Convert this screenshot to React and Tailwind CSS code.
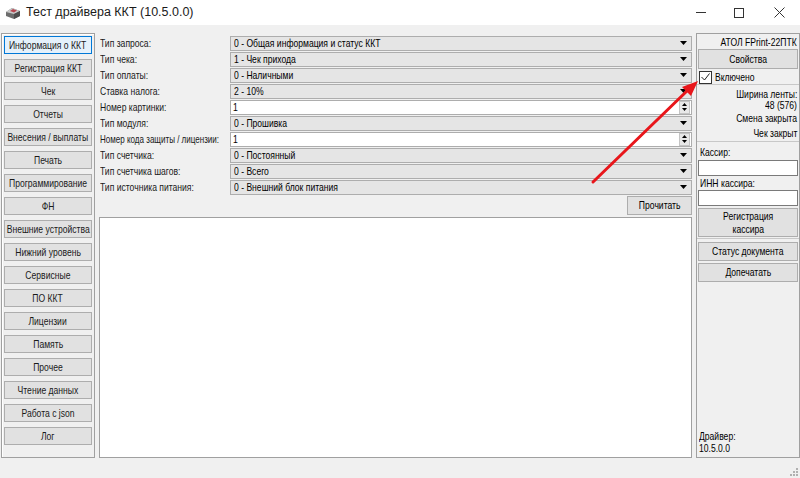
import React from 'react';

const navItems = [
  'Информация о ККТ',
  'Регистрация ККТ',
  'Чек',
  'Отчеты',
  'Внесения / выплаты',
  'Печать',
  'Программирование',
  'ФН',
  'Внешние устройства',
  'Нижний уровень',
  'Сервисные',
  'ПО ККТ',
  'Лицензии',
  'Память',
  'Прочее',
  'Чтение данных',
  'Работа с json',
  'Лог'
];

const fields = [
  { label: 'Тип запроса:', value: '0 - Общая информация и статус ККТ', kind: 'combo' },
  { label: 'Тип чека:', value: '1 - Чек прихода', kind: 'combo' },
  { label: 'Тип оплаты:', value: '0 - Наличными', kind: 'combo' },
  { label: 'Ставка налога:', value: '2 - 10%', kind: 'combo' },
  { label: 'Номер картинки:', value: '1', kind: 'spin' },
  { label: 'Тип модуля:', value: '0 - Прошивка', kind: 'combo' },
  { label: 'Номер кода защиты / лицензии:', value: '1', kind: 'spin', tight: true },
  { label: 'Тип счетчика:', value: '0 - Постоянный', kind: 'combo' },
  { label: 'Тип счетчика шагов:', value: '0 - Всего', kind: 'combo' },
  { label: 'Тип источника питания:', value: '0 - Внешний блок питания', kind: 'combo' }
];

// narrow text, the dialog uses an 8pt Tahoma-like face
const N = ({ children, o = 'left', tight }) => (
  <span
    className={`inline-block whitespace-nowrap ${
      o === 'left' ? 'origin-left' : o === 'right' ? 'origin-right' : 'origin-center'
    } ${tight ? 'scale-x-[0.73]' : 'scale-x-[0.78]'}`}
  >
    {children}
  </span>
);

const DropArrow = () => (
  <svg width="7" height="4" viewBox="0 0 7 4" className="shrink-0">
    <path d="M0 0h7L3.5 4z" fill="#000" />
  </svg>
);

const SpinArrows = () => (
  <div className="flex flex-col items-center justify-center gap-[2px] w-[11px] h-[13px] bg-[#e8e8e8] border border-[#c4c4c4]">
    <svg width="5" height="3" viewBox="0 0 5 3"><path d="M0 3h5L2.5 0z" fill="#000" /></svg>
    <svg width="5" height="3" viewBox="0 0 5 3"><path d="M0 0h5L2.5 3z" fill="#000" /></svg>
  </div>
);

const Field = ({ label, value, kind, tight }) => (
  <div className="flex items-center h-[16px]">
    <div className="w-[131px] shrink-0 pl-[1px] text-[#1a1a1a]">
      <N tight={tight}>{label}</N>
    </div>
    {kind === 'combo' ? (
      <div className="flex-1 h-[15px] flex items-center justify-between bg-[#e5e5e5] border border-[#adadad] pl-[3px] pr-[4px]">
        <N>{value}</N>
        <DropArrow />
      </div>
    ) : (
      <div className="flex-1 h-[15px] flex items-center justify-between bg-white border border-[#adadad] pl-[2px] pr-[1px]">
        <N>{value}</N>
        <SpinArrows />
      </div>
    )}
  </div>
);

const WinButton = ({ children, selected, className = '' }) => (
  <div
    className={`flex items-center justify-center text-center border ${
      selected ? 'bg-[#e5f1fb] border-[#0078d7]' : 'bg-[#e1e1e1] border-[#adadad]'
    } ${className}`}
  >
    {children}
  </div>
);

export default function App() {
  return (
    <div
      className="relative w-[800px] h-[478px] bg-[#f0f0f0] flex flex-col overflow-hidden text-[11px] text-black leading-none"
      style={{ fontFamily: '"Liberation Sans", Arial, sans-serif' }}
    >
      {/* title bar */}
      <div className="h-[25px] bg-white flex items-center shrink-0">
        <svg width="16" height="14" viewBox="0 0 16 14" className="ml-[5px] mr-[5px]">
          <path d="M1 6l6-4 8 3v5l-6 3-8-3z" fill="#6d6d6d" />
          <path d="M1 6l6-4 8 3-6 3z" fill="#c9c9c9" />
          <path d="M5 5l3-2 4 1.5-3 2z" fill="#b8454f" />
          <path d="M9 8l6-3v5l-6 3z" fill="#4d4d4d" />
        </svg>
        <span className="text-[12.5px] text-[#1a1a1a]">Тест драйвера ККТ (10.5.0.0)</span>
        <div className="ml-auto flex items-center h-full">
          <div className="w-[38px] h-full flex items-center justify-center">
            <div className="w-[10px] h-[1px] bg-[#333]" />
          </div>
          <div className="w-[38px] h-full flex items-center justify-center">
            <div className="w-[10px] h-[10px] border border-[#333]" />
          </div>
          <div className="w-[42px] h-full flex items-center justify-center">
            <svg width="11" height="11" viewBox="0 0 11 11">
              <path d="M0.5 0.5l10 10M10.5 0.5l-10 10" stroke="#333" strokeWidth="1" />
            </svg>
          </div>
        </div>
      </div>

      {/* main */}
      <div className="flex pt-[8px] pl-[1px] h-[433px] shrink-0">
        {/* left nav */}
        <div className="w-[94px] shrink-0 border border-[#a0a0a0] shadow-[inset_1px_1px_0_#fff] flex flex-col gap-[5px] px-[2px] pt-[2px]">
          {navItems.map((item, i) => (
            <WinButton key={item} selected={i === 0} className="h-[18px] text-[#1a1a1a]">
              <N o="center">{item}</N>
            </WinButton>
          ))}
        </div>

        {/* center */}
        <div className="w-[593px] ml-[4px] flex flex-col pt-[2px]">
          {fields.map((f) => (
            <Field key={f.label} {...f} />
          ))}
          <div className="flex justify-end mt-[1px]">
            <WinButton className="w-[65px] h-[19px]">
              <N o="center">Прочитать</N>
            </WinButton>
          </div>
          <div className="flex-1 mt-[2px] bg-white border border-[#a0a0a0]" />
        </div>

        {/* right panel */}
        <div className="w-[104px] ml-[4px] shrink-0 border border-[#a0a0a0] flex flex-col">
          <div className="flex flex-col px-[1px]">
            <div className="text-right pr-[1px] pt-[3px] h-[14px]">
              <N o="right">АТОЛ FPrint-22ПТК</N>
            </div>
            <WinButton className="h-[20px] mt-[1px]">
              <N o="center">Свойства</N>
            </WinButton>
            <div className="flex items-center h-[14px] mt-[1px] pl-[1px]">
              <div className="w-[13px] h-[13px] bg-white border border-[#333] flex items-center justify-center">
                <svg width="9" height="8" viewBox="0 0 9 8">
                  <path d="M0.5 4l3 3 5-6.5" fill="none" stroke="#222" strokeWidth="1" />
                </svg>
              </div>
              <span className="ml-[3px]">
                <N>Включено</N>
              </span>
            </div>
          </div>
          <div className="border-t border-[#c8c8c8] flex flex-col items-end pr-[2px] pt-[4px] h-[57px]">
            <div className="h-[11px]"><N o="right">Ширина ленты:</N></div>
            <div className="h-[13px]"><N o="right">48 (576)</N></div>
            <div className="h-[15px]"><N o="right">Смена закрыта</N></div>
            <div><N o="right">Чек закрыт</N></div>
          </div>
          <div className="border-t border-[#c8c8c8] flex flex-col px-[1px] pt-[5px]">
            <div className="h-[12px] pl-[2px]"><N>Кассир:</N></div>
            <div className="h-[16px] mt-[1px] bg-white border border-[#7a7a7a]" />
            <div className="h-[14px] pl-[2px] flex items-center"><N>ИНН кассира:</N></div>
            <div className="h-[16px] bg-white border border-[#7a7a7a]" />
            <WinButton className="h-[29px] mt-[2px] flex-col gap-[2px]">
              <N o="center">Регистрация</N>
              <N o="center">кассира</N>
            </WinButton>
          </div>
          <div className="mt-[1px] border-t border-[#c8c8c8] flex flex-col px-[1px] pt-[3px] gap-[2px]">
            <WinButton className="h-[19px]"><N o="center">Статус документа</N></WinButton>
            <WinButton className="h-[19px]"><N o="center">Допечатать</N></WinButton>
          </div>
          <div className="mt-auto pl-[2px] pb-[3px] leading-[12px] flex flex-col">
            <N>Драйвер:</N>
            <N>10.5.0.0</N>
          </div>
        </div>
      </div>

      {/* size grip */}
      <svg width="8" height="8" viewBox="0 0 8 8" className="absolute right-[2px] bottom-[2px]">
        <g fill="#b0b0b0">
          <rect x="6" y="0" width="2" height="2" />
          <rect x="3" y="3" width="2" height="2" />
          <rect x="6" y="3" width="2" height="2" />
          <rect x="0" y="6" width="2" height="2" />
          <rect x="3" y="6" width="2" height="2" />
          <rect x="6" y="6" width="2" height="2" />
        </g>
      </svg>

      {/* red annotation arrow */}
      <svg width="800" height="478" viewBox="0 0 800 478" className="absolute left-0 top-0 pointer-events-none">
        <line x1="593" y1="182" x2="688" y2="90" stroke="#e8161b" strokeWidth="3" strokeLinecap="round" />
        <path d="M698 81L682 87L691 96z" fill="#e8161b" />
      </svg>
    </div>
  );
}
